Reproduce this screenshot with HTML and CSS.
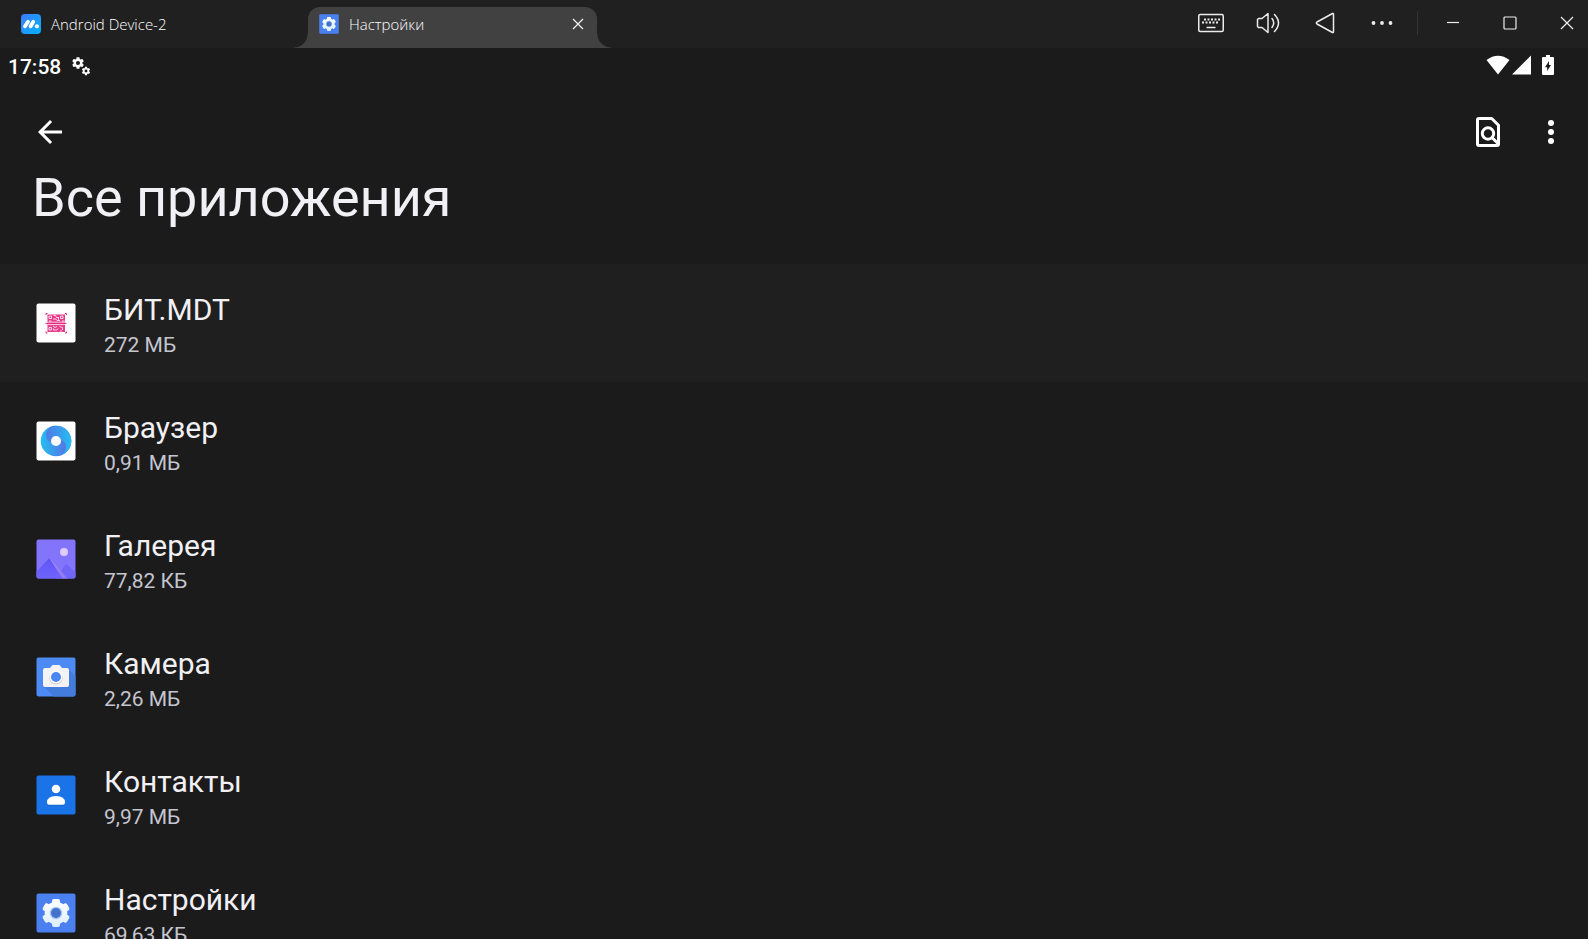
FILE: index.html
```html
<!DOCTYPE html>
<html lang="ru">
<head>
<meta charset="utf-8">
<title>Все приложения</title>
<link rel="stylesheet" href="styles.css">
</head>
<body>
<svg class="defs" width="0" height="0" aria-hidden="true">
  <defs>
    <linearGradient id="g-logo" x1="0" y1="0" x2="1" y2="1"><stop offset="0" stop-color="#3f7cff"/><stop offset="1" stop-color="#00b2ff"/></linearGradient>
    <linearGradient id="g-swirl" x1="0" y1="0" x2="1" y2="0"><stop offset="0" stop-color="#25bdf2"/><stop offset=".8" stop-color="#5278e4"/></linearGradient>
    <linearGradient id="g-swirl2" x1="0" y1="0" x2="1" y2="0"><stop offset=".1" stop-color="#4d7fe6"/><stop offset="1" stop-color="#25bdf2"/></linearGradient>
    <linearGradient id="g-gear" x1="0" y1="0" x2="0" y2="1"><stop offset="0" stop-color="#ffffff"/><stop offset="1" stop-color="#dcedfd"/></linearGradient>
    <linearGradient id="g-hill" x1="0" y1="0" x2="0" y2="1"><stop offset="0" stop-color="#5d55f8"/><stop offset="1" stop-color="#7064fb"/></linearGradient>
    <linearGradient id="g-ray" x1="0" y1="0" x2="1" y2="1"><stop offset="0" stop-color="#b487e0"/><stop offset="1" stop-color="#8678fb"/></linearGradient>
    <clipPath id="gear-shape">
      <circle cx="20" cy="20" r="11.300"/>
      <rect x="16" y="6" width="8" height="28" rx="2"/>
      <rect x="16" y="6" width="8" height="28" rx="2" transform="rotate(60 20 20)"/>
      <rect x="16" y="6" width="8" height="28" rx="2" transform="rotate(120 20 20)"/>
    </clipPath>
    <symbol id="settings-app" viewBox="0 0 40 40">
      <rect x=".5" y=".5" width="39" height="39" rx="2" fill="#4b80f0"/>
      <rect x="5" y="5" width="30" height="30" fill="url(#g-gear)" clip-path="url(#gear-shape)"/>
      <circle cx="20" cy="20" r="6.300" fill="#a9cdf6"/><circle cx="20" cy="20" r="5" fill="#4471cb"/>
    </symbol>
    <symbol id="gear" viewBox="0 0 24 24">
      <path fill="currentColor" fill-rule="evenodd" d="M19.430 12.980c.04-.32.07-.64.07-.980s-.03-.66-.07-.980l2.110-1.650c.19-.15.24-.42.12-.64l-2-3.460c-.12-.22-.39-.3-.61-.22l-2.490 1c-.52-.4-1.080-.73-1.690-.980l-.380-2.650A.488.488 0 0 0 14 2h-4c-.25 0-.46.18-.49.42l-.380 2.650c-.61.25-1.170.59-1.690.980l-2.490-1c-.23-.09-.49 0-.61.22l-2 3.460c-.13.22-.07.49.12.64l2.110 1.650c-.04.32-.07.65-.07.980s.03.66.07.980l-2.110 1.650c-.19.15-.24.42-.12.64l2 3.460c.12.22.39.3.61.22l2.490-1c.52.4 1.080.73 1.690.980l.380 2.650c.03.24.24.42.49.42h4c.25 0 .46-.18.49-.42l.380-2.650c.61-.25 1.170-.59 1.690-.980l2.490 1c.23.09.49 0 .61-.22l2-3.460c.12-.22.07-.49-.12-.64zM12 15.500a3.500 3.500 0 1 1 0-7 3.500 3.500 0 0 1 0 7z"/>
    </symbol>
  </defs>
</svg>

<header class="titlebar">
  <nav class="tabs">
    <button class="tab tab-home" type="button">
      <svg class="tab-icon" viewBox="0 0 20 20"><rect width="20" height="20" rx="4" fill="url(#g-logo)"/><path d="M4 12.300 7 7.800M9.600 12.300l2.700-4.500" stroke="#fff" stroke-width="3.800" stroke-linecap="round"/><circle cx="15.900" cy="12.300" r="2.100" fill="#fff"/></svg>
      <span>Android Device-2</span>
    </button>
    <div class="tab tab-active">
      <svg class="tab-icon"><use href="#settings-app"/></svg>
      <span class="tab-label">Настройки</span>
      <button class="tab-close" type="button" aria-label="Закрыть вкладку"><svg width="12" height="12" viewBox="0 0 12 12"><path d="M1 1l10 10M11 1 1 11" stroke="#eee" stroke-width="1.300"/></svg></button>
    </div>
  </nav>
  <div class="controls">
    <button type="button" aria-label="Клавиатура"><svg width="26" height="20" viewBox="0 0 26 20" fill="none" stroke="#ececec"><rect x=".75" y="1.500" width="24.500" height="17" rx="1.500" stroke-width="1.500"/><path d="M6 6.500h16.500M4 9.500h16" stroke-width="2" stroke-dasharray="2 1.500"/><path d="M8.500 14.500h9" stroke-width="1.500"/></svg></button>
    <button type="button" aria-label="Громкость"><svg width="24" height="22" viewBox="0 0 24 22" fill="none" stroke="#ececec" stroke-width="1.500" stroke-linejoin="round" stroke-linecap="round"><path d="M2.500 6.500H6l6-5V20.500l-6-5H2.500l-1-1v-7zM16 6.500q3.500 4.500 0 9M18.500 2.500q8 8.500 0 17"/></svg></button>
    <button type="button" aria-label="Назад"><svg width="20" height="22" viewBox="0 0 20 22" fill="none" stroke="#ececec" stroke-width="1.500" stroke-linejoin="round"><path d="M17.500 1.500 2 10q-1.300 1 0 2l15.500 8.500q1 .3 1-1v-17q0-1.300-1-1z"/></svg></button>
    <button type="button" aria-label="Ещё"><svg width="22" height="6" viewBox="0 0 22 6" fill="#ececec"><circle cx="2.500" cy="3" r="1.900"/><circle cx="11" cy="3" r="1.900"/><circle cx="19.500" cy="3" r="1.900"/></svg></button>
    <span class="divider"></span>
    <button type="button" aria-label="Свернуть"><svg width="14" height="14" viewBox="0 0 14 14"><path d="M1 6.500h12" stroke="#eee" stroke-width="1.200"/></svg></button>
    <button type="button" aria-label="Развернуть"><svg width="14" height="14" viewBox="0 0 14 14"><rect x="1" y="1" width="12" height="12" rx="1" fill="none" stroke="#eee" stroke-width="1.200"/></svg></button>
    <button type="button" aria-label="Закрыть"><svg width="14" height="14" viewBox="0 0 14 14"><path d="m1 1 12 12M13 1 1 13" stroke="#eee" stroke-width="1.200"/></svg></button>
  </div>
</header>

<div class="statusbar">
  <time>17:58</time>
  <svg class="status-gears" width="20" height="20" viewBox="0 0 20 20"><use href="#gear" x="0" y="0" width="14" height="14"/><use href="#gear" x="10" y="10" width="10" height="10"/></svg>
  <div class="status-right">
    <svg width="24" height="20" viewBox="0 0 24 20"><path fill="#fff" d="M12 19.500.5 5Q12-3.500 23.500 5z"/></svg>
    <svg width="20" height="20" viewBox="0 0 20 20"><path fill="#fff" d="M19 .5v19H0z"/></svg>
    <svg class="battery" width="12" height="20" viewBox="0 0 12 20"><path fill="#fff" fill-rule="evenodd" d="M4 0h4v2h3q1 0 1 1v16q0 1-1 1H1q-1 0-1-1V3q0-1 1-1h3zM7 6l-4 6.200h2.200V16L9 10H7z"/></svg>
  </div>
</div>

<div class="toolbar">
  <button type="button" aria-label="Назад"><svg viewBox="0 0 24 24"><path fill="#fff" d="M20 11H7.830l5.590-5.590L12 4l-8 8 8 8 1.410-1.410L7.830 13H20z"/></svg></button>
  <div class="toolbar-actions">
    <button type="button" aria-label="Поиск"><svg viewBox="0 0 24 24" fill="none" stroke="#fff" stroke-width="2"><path d="M5 4q0-1 1-1h8.500L19 7.500V20q0 1-1 1H6q-1 0-1-1z" stroke-linejoin="round"/><circle cx="12" cy="13" r="3.800"/><path d="m14.500 15.500 4.500 4.500"/></svg></button>
    <button type="button" aria-label="Другие параметры"><svg viewBox="0 0 24 24" fill="#fff"><circle cx="12" cy="6" r="2"/><circle cx="12" cy="12" r="2"/><circle cx="12" cy="18" r="2"/></svg></button>
  </div>
</div>

<h1>Все приложения</h1>

<ul class="apps">
  <li class="app app-hover">
    <svg class="app-icon" viewBox="0 0 40 40"><rect x=".5" y=".5" width="39" height="39" rx="2" fill="#fff"/><rect x="11.500" y="11.500" width="17.500" height="17.500" fill="#e8398b"/><g stroke="#fff" fill="none" stroke-width=".8"><path d="M13 13h2.500v2.500H13zM24.500 13H27v2.500h-2.500zM13 24.500h2.500V27H13z"/><path d="M17.500 12.500h2l1 2h2M17 16h3l1 1.500h3M13 18h2.500M26 18h2.500M17 23l2 1.500 2-1M18 27h3l1-1.500M23.500 23.500l3 1v2.500M24 28h2M17.500 25.500v2M22.500 14v3"/><path d="M11.500 19.200H29M11.500 21.600H29"/></g><g stroke="#e5257f" fill="none"><path d="M9.500 20.400h21"/><path d="M10 12v-1.500h1.500M29 10.500h1.500V12M10 28.500V30h1.500M29 30h1.500v-1.500"/></g></svg>
    <div class="app-text"><span class="app-name">БИТ.MDT</span><span class="app-size">272 МБ</span></div>
  </li>
  <li class="app">
    <svg class="app-icon" viewBox="0 0 40 40"><rect x=".5" y=".5" width="39" height="39" rx="2" fill="#fff"/><circle cx="20" cy="20" r="15.300" fill="url(#g-swirl)"/><path d="M16.500 5.100Q10 8.500 10 14.500T17 22l6-4q7 2 7 8t-6.500 8.900A15.300 15.300 0 0 0 16.500 5.100z" fill="url(#g-swirl2)"/><circle cx="20" cy="20" r="5" fill="#fff"/></svg>
    <div class="app-text"><span class="app-name">Браузер</span><span class="app-size">0,91 МБ</span></div>
  </li>
  <li class="app">
    <svg class="app-icon" viewBox="0 0 40 40"><rect x=".5" y=".5" width="39" height="39" rx="2" fill="#8275fc"/><circle cx="28" cy="13" r="4" fill="#dccbfb"/><path d="M20 39.500 30 24.500l9.500 9v4q0 2-2 2z" fill="#7165f6"/><path d="M.5 32.500 13.500 19l13 20.500h-24q-2 0-2-2z" fill="url(#g-hill)"/><path d="m13.500 19 18 20.500h-5z" fill="url(#g-ray)"/></svg>
    <div class="app-text"><span class="app-name">Галерея</span><span class="app-size">77,82 КБ</span></div>
  </li>
  <li class="app">
    <svg class="app-icon" viewBox="0 0 40 40"><rect x=".5" y=".5" width="39" height="39" rx="2" fill="#4e8af3"/><path d="m32 12 7.500 7.500v18q0 2-2 2H18L8 29.500z" fill="#447cdb"/><path d="M9 11h5l2.500-3h7l2.500 3h5q2 0 2 2v15q0 2-2 2H9q-2 0-2-2V13q0-2 2-2z" fill="#f3f3f3"/><circle cx="20" cy="20.800" r="6.800" fill="#c9c9cf"/><circle cx="20" cy="20" r="6.500" fill="#fff"/><circle cx="20" cy="20" r="5" fill="#4a87f0"/></svg>
    <div class="app-text"><span class="app-name">Камера</span><span class="app-size">2,26 МБ</span></div>
  </li>
  <li class="app">
    <svg class="app-icon" viewBox="0 0 40 40"><rect x=".5" y=".5" width="39" height="39" rx="2" fill="#1b73e8"/><circle cx="20" cy="14.800" r="4.400" fill="#1765cc"/><path d="M11 28.500q0-7 9-7t9 7q0 2.300-2 2.300H13q-2 0-2-2.300z" fill="#1765cc"/><circle cx="20" cy="14" r="4.300" fill="#fff"/><path d="M11 27.500q0-6.500 9-6.500t9 6.500q0 2.300-2 2.300H13q-2 0-2-2.300z" fill="#fff"/></svg>
    <div class="app-text"><span class="app-name">Контакты</span><span class="app-size">9,97 МБ</span></div>
  </li>
  <li class="app">
    <svg class="app-icon"><use href="#settings-app"/></svg>
    <div class="app-text"><span class="app-name">Настройки</span><span class="app-size">69,63 КБ</span></div>
  </li>
</ul>
</body>
</html>
```

FILE: styles.css
```css
* { box-sizing: border-box; }
body {
  margin: 0;
  height: 100vh;
  overflow: hidden;
  display: flex;
  flex-direction: column;
  background: #1b1b1b;
  color: #f1f0f4;
  font-family: Roboto, sans-serif;
}
.defs { position: absolute; }
svg { display: block; flex: none; }
button {
  display: flex;
  align-items: center;
  justify-content: center;
  padding: 0;
  border: 0;
  background: none;
  color: inherit;
  font: inherit;
}

.titlebar {
  flex: none;
  height: 48px;
  display: flex;
  justify-content: space-between;
  background: #202020;
  color: #fff;
  font: 15px/20px "Open Sans", sans-serif;
}
.tabs { display: flex; align-items: flex-end; }
.tab {
  height: 41px;
  display: flex;
  align-items: center;
  justify-content: flex-start;
  gap: 10px;
  padding-bottom: 7px;
}
.tab-home { width: 308px; padding-left: 21px; font-weight: 300; }
.tab-icon { width: 20px; height: 20px; }
.tab-active {
  position: relative;
  width: 289px;
  padding-left: 11px;
  padding-right: 8px;
  border-radius: 12px 12px 0 0;
  background: #414141;
}
.tab-active::before,
.tab-active::after {
  content: "";
  position: absolute;
  bottom: 0;
  width: 14px;
  height: 14px;
}
.tab-active::before { right: 100%; background: radial-gradient(circle at 0 0, transparent 13px, #414141 14px); }
.tab-active::after { left: 100%; background: radial-gradient(circle at 100% 0, transparent 13px, #414141 14px); }
.tab-label { flex: 1; font-weight: 300; }
.tab-close { width: 22px; height: 22px; }

.controls { display: flex; align-items: center; gap: 15px; padding-bottom: 2px; }
.controls button { width: 42px; height: 42px; }
.divider { width: 1px; height: 24px; margin: 0 -1px; background: #333; }

.statusbar {
  flex: none;
  height: 36px;
  display: flex;
  align-items: center;
  gap: 10px;
  padding: 0 34px 0 8px;
  color: #fff;
  font-size: 21px;
  font-weight: 500;
}
.statusbar time { padding-top: 2px; }
.status-right { display: flex; gap: 2px; margin-left: auto; padding-bottom: 2px; }
.battery { margin-left: 8px; }

.toolbar {
  flex: none;
  height: 96px;
  display: flex;
  align-items: center;
  justify-content: space-between;
  padding: 0 19px 0 32px;
}
.toolbar svg { width: 36px; height: 36px; }
.toolbar-actions { display: flex; gap: 27px; }

h1 {
  flex: none;
  margin: -14px 0 0;
  padding: 0 32px 34px;
  font-size: 54px;
  line-height: 64px;
  font-weight: 400;
}

.apps {
  flex: 1;
  min-height: 0;
  margin: 0;
  padding: 0;
  overflow: hidden;
  list-style: none;
}
.app {
  height: 118px;
  display: flex;
  align-items: center;
  gap: 28px;
  padding: 0 36px;
}
.app-hover { background: #1f1f1f; }
.app-icon { width: 40px; height: 40px; }
.app-text { display: flex; flex-direction: column; gap: 4px; padding-top: 4px; }
.app-name { font-size: 30px; line-height: 36px; }
.app-size { font-size: 21px; line-height: 26px; color: #c5c5d0; }
```
